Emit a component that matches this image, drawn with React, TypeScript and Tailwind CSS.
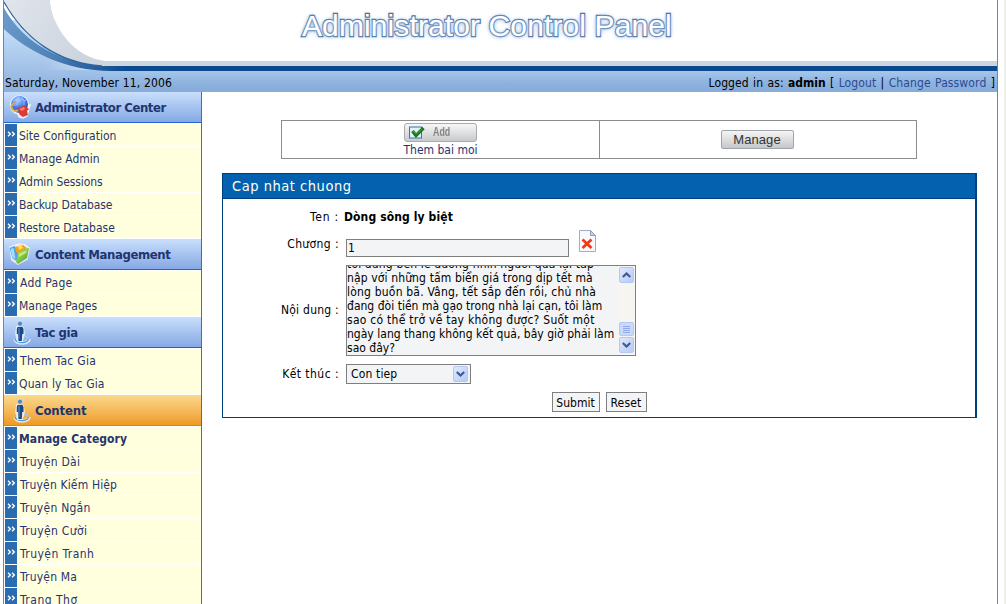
import React from "react";

type IconKind = "globe" | "folder" | "person";

function MenuIcon({ kind }: { kind: IconKind }) {
  if (kind === "globe") {
    return (
      <svg width="24" height="26" viewBox="0 0 24 26" className="shrink-0">
        <defs>
          <radialGradient id="globe" cx=".4" cy=".25" r=".8">
            <stop offset="0" stopColor="#b9d4ff" />
            <stop offset=".45" stopColor="#4f86ee" />
            <stop offset="1" stopColor="#1b45ae" />
          </radialGradient>
        </defs>
        <circle cx="12.500" cy="11" r="9.800" fill="#fff" opacity=".7" />
        <path d="M10 16l2 7 4 1 4-2 1-4 2-7z" fill="#fff" stroke="#fff" strokeWidth="1.500" opacity=".8" />
        <circle cx="12.500" cy="10.500" r="8.500" fill="url(#globe)" />
        <path d="M6 7q6-4 13 0M5 11h5M12 3q-3 4-2 8M15 3q3 4 2 8" stroke="#a9c8ff" strokeWidth=".8" fill="none" />
        <path d="M9 9c-4 0-5.500 3-4 5.500s4 3.500 6 1.500" fill="none" stroke="#e0a84a" strokeWidth="2" />
        <path d="M10 14l3-1 7-2-1 2 3 2-2 2 1 4-5 2-3-2-2-3 2-1z" fill="#dd3a34" />
        <path d="M12 15l5-2 1 2-3 2z" fill="#ff7d68" />
      </svg>
    );
  }
  if (kind === "folder") {
    return (
      <svg width="24" height="26" viewBox="0 0 24 26" className="shrink-0">
        <defs>
          <linearGradient id="folder" x1="0" y1="0" x2="1" y2="1">
            <stop offset="0" stopColor="#c4ee62" />
            <stop offset="1" stopColor="#3c9a2a" />
          </linearGradient>
        </defs>
        <path d="M3 6l6-2 3-1 6 1 4 3-2 11-9 5-6-4z" fill="#fff" stroke="#fff" strokeWidth="1.500" opacity=".7" />
        <path d="M2.500 7l5-2 4 5-1 11-5-4z" fill="#4fa3e3" />
        <path d="M3.500 8l3-1 2 11-3-2z" fill="#a7dcff" />
        <path d="M8 6l8-2 4 3-8 6-3-2z" fill="#f0a020" />
        <path d="M11 5l3-2 2 4-4 2z" fill="#ffe25a" />
        <path d="M11 12l4-2 1-2 6-1-2 10-9 6-2-2z" fill="url(#folder)" />
        <path d="M12 13l4-2 4-2-1 3-7 4z" fill="#e2f79a" opacity=".7" />
      </svg>
    );
  }
  return (
    <svg width="24" height="26" viewBox="0 0 24 26" className="shrink-0">
      <path d="M8 20q1 4 8 4 6-1 6-4" fill="none" stroke="#fff" strokeWidth="3.500" opacity=".7" />
      <path d="M8 20q1 3.500 8 3.500 5-.5 5.500-3.500" fill="none" stroke="#4f9be6" strokeWidth="1.500" />
      <path d="M17 17q3.500.5 4.500 2.500" fill="none" stroke="#9cc8f6" strokeWidth="1.400" />
      <path d="M10 8l6 1 1 6-2 7h-4L9 15z" fill="#fff" stroke="#fff" strokeWidth="1.800" opacity=".7" />
      <circle cx="13" cy="4.700" r="2.600" fill="#5787bd" stroke="#e8f1fc" strokeWidth=".7" />
      <path d="M10.500 8h5l1 2v5h-1.300L14.800 22h-3.300l-.5-7H9.800v-5z" fill="#174a86" />
      <path d="M12 9v11" fill="none" stroke="#5f97d2" strokeWidth="1" />
    </svg>
  );
}

interface Section {
  title: string;
  icon: IconKind;
  active?: boolean;
  titleClass: string;
  items: { label: string; cls: string }[];
}

const sections: Section[] = [
  {
    title: "Administrator Center",
    icon: "globe",
    titleClass: "tracking-[-0.45px]",
    items: [
      { label: "Site Configuration", cls: "tracking-[0px]" },
      { label: "Manage Admin", cls: "tracking-[0px]" },
      { label: "Admin Sessions", cls: "tracking-[-0.07px]" },
      { label: "Backup Database", cls: "tracking-[-0.07px]" },
      { label: "Restore Database", cls: "tracking-[0px]" },
    ],
  },
  {
    title: "Content Management",
    icon: "folder",
    titleClass: "tracking-[-0.4px]",
    items: [
      { label: "Add Page", cls: "ml-px tracking-[0.25px]" },
      { label: "Manage Pages", cls: "tracking-[0px]" },
    ],
  },
  {
    title: "Tac gia",
    icon: "person",
    titleClass: "tracking-[-0.4px]",
    items: [
      { label: "Them Tac Gia", cls: "ml-px tracking-[0.3px]" },
      { label: "Quan ly Tac Gia", cls: "tracking-[0.13px]" },
    ],
  },
  {
    title: "Content",
    icon: "person",
    active: true,
    titleClass: "tracking-[-0.15px]",
    items: [
      { label: "Manage Category", cls: "font-bold tracking-[0.07px]" },
      { label: "Truyện Dài", cls: "ml-px tracking-[0.3px]" },
      { label: "Truyện Kiếm Hiệp", cls: "ml-px tracking-[0.15px]" },
      { label: "Truyện Ngắn", cls: "ml-px tracking-[0.25px]" },
      { label: "Truyện Cười", cls: "ml-px tracking-[0.35px]" },
      { label: "Truyện Tranh", cls: "ml-px tracking-[0.45px]" },
      { label: "Truyện Ma", cls: "ml-px tracking-[0.2px]" },
      { label: "Trang Thơ", cls: "ml-px tracking-[0.5px]" },
    ],
  },
];

function Sidebar() {
  return (
    <nav className="w-[198px] shrink-0 border-r border-[#5f6b78] bg-white text-[#27346f]">
      {sections.map((s) => (
        <section key={s.title}>
          <h2
            className={
              s.active
                ? "mb-px flex h-[31px] items-center border-b border-[#d98613] bg-linear-to-b from-[#fbd98a] to-[#ee9a1c] pl-[3px] text-[13px] font-bold text-[#1f3570]"
                : "mb-px flex h-[31px] items-center border-b border-[#1f66c8] bg-linear-to-b from-[#c9dffc] to-[#86a9e4] pl-[3px] text-[13px] font-bold text-[#1f3570]"
            }
          >
            <MenuIcon kind={s.icon} />
            <span className={"ml-1 " + s.titleClass}>{s.title}</span>
          </h2>
          <ul>
            {s.items.map((it) => (
              <li key={it.label} className="mb-px flex h-[22px] pl-px">
                <span className="flex w-3 shrink-0 items-center justify-center bg-[#2a6cb0]">
                  <svg width="9" height="6" viewBox="0 0 9 6" className="mb-[3px]">
                    <path d="M1 .8L3.300 3 1 5.200M5 .8L7.300 3 5 5.200" fill="none" stroke="#fff" strokeWidth="1.400" />
                  </svg>
                </span>
                <span className="flex grow items-center bg-[#ffffdd] pt-[2px] pl-[2px] whitespace-nowrap">
                  <span className={it.cls}>{it.label}</span>
                </span>
              </li>
            ))}
          </ul>
        </section>
      ))}
    </nav>
  );
}

function Header() {
  return (
    <header className="relative h-[92px] shrink-0 overflow-hidden">
      <svg width="993" height="92" viewBox="0 0 993 92" className="absolute inset-0">
        <defs>
          <linearGradient id="bar" x1="0" y1="0" x2="0" y2="1">
            <stop offset="0" stopColor="#a9c8ec" />
            <stop offset=".6" stopColor="#8db2de" />
            <stop offset="1" stopColor="#86abda" />
          </linearGradient>
          <linearGradient id="corner" x1="0" y1="28" x2="0" y2="92" gradientUnits="userSpaceOnUse">
            <stop offset="0" stopColor="#c6dffa" />
            <stop offset="1" stopColor="#8db0dd" />
          </linearGradient>
          <linearGradient id="cornerFade" x1="40" y1="0" x2="160" y2="0" gradientUnits="userSpaceOnUse">
            <stop offset="0" stopColor="#fff" />
            <stop offset="1" stopColor="#000" />
          </linearGradient>
          <mask id="fade">
            <rect width="170" height="92" fill="url(#cornerFade)" />
          </mask>
          <linearGradient id="swoosh" x1="0" y1="0" x2="120" y2="70" gradientUnits="userSpaceOnUse">
            <stop offset="0" stopColor="#6f9ccb" />
            <stop offset=".5" stopColor="#4f82b8" />
            <stop offset="1" stopColor="#0b4a8e" />
          </linearGradient>
          <linearGradient id="silver" x1="0" y1="0" x2="70" y2="60" gradientUnits="userSpaceOnUse">
            <stop offset="0" stopColor="#e1e5ec" />
            <stop offset="1" stopColor="#cdd5df" />
          </linearGradient>
        </defs>
        <rect width="993" height="92" fill="#fff" />
        <rect y="70" width="993" height="22" fill="url(#bar)" />
        <rect y="20" width="170" height="72" fill="url(#corner)" mask="url(#fade)" />
        <path d="M0 0V29C22 50 60 71 108 71H993V66H108C60 66 20 44 0 8z" fill="url(#swoosh)" />
        <path d="M0 0V2C20 38 53 63 98 66H993V61H102C70 58 48 27 46 0z" fill="url(#silver)" />
        <path d="M46 0C48 27 70 58 102 61H993V0z" fill="#fff" />
        <path d="M0 2C20 38 53 63 98 66" fill="none" stroke="#2f649d" strokeWidth="1.300" />
      </svg>
      <div className="relative flex h-full flex-col">
        <h1 className="pt-[8px] pl-[298px] font-[Liberation_Sans] text-[30px] leading-[36px] tracking-[0.11px] whitespace-nowrap text-white [-webkit-text-stroke:2.4px_#3d5b86] [paint-order:stroke_fill] [text-shadow:0_0_4px_#8fb6e6,0_1px_5px_#b4d0f2]">
          Administrator Control Panel
        </h1>
        <div className="mt-auto flex h-[17px] items-center justify-between pr-[2px] pl-px whitespace-nowrap text-black">
          <span className="tracking-[0.14px]">Saturday, November 11, 2006</span>
          <span className="tracking-[0.12px] [word-spacing:0.75px]">
            Logged in as: <b className="tracking-[0px]">admin</b> [ <a className="text-[#2b4a94]">Logout</a> |{" "}
            <a className="text-[#2b4a94]">Change Password</a> ]
          </span>
        </div>
      </div>
    </header>
  );
}

function Chevron({ up }: { up?: boolean }) {
  return (
    <span className="flex h-4 w-[15px] items-center justify-center rounded-[2px] border border-[#b5c8f5] bg-linear-to-br from-[#dfe9ff] to-[#b5caf8]">
      <svg width="9" height="6" viewBox="0 0 9 6">
        <path d={up ? "M.8 5L4.500 1.500 8.200 5" : "M.8 1L4.500 4.500 8.200 1"} fill="none" stroke="#43598c" strokeWidth="2.200" />
      </svg>
    </span>
  );
}

const story = [
  { t: "tôi đứng bên lề đường nhìn người qua lại tấp", c: "tracking-[0.15px]" },
  { t: "nập với những tấm biển giá trong dịp tết mà", c: "tracking-[0.13px]" },
  { t: "lòng buồn bã. Vâng, tết sắp đến rồi, chủ nhà", c: "tracking-[0.2px]" },
  { t: "đang đòi tiền mà gạo trong nhà lại cạn, tôi làm", c: "tracking-[0.02px]" },
  { t: "sao có thể trở về tay không được? Suốt một", c: "tracking-[0.26px]" },
  { t: "ngày lang thang không kết quả, bây giờ phải làm", c: "tracking-[0.02px]" },
  { t: "sao đây?", c: "tracking-[0px]" },
];

function Toolbar() {
  return (
    <div className="mt-[28px] ml-[79px] flex h-[39px] w-[636px] border border-[#8c8c8c]">
      <div className="flex w-[318px] flex-col items-center border-r border-[#8c8c8c] pt-[2px]">
        <div className="flex h-[19px] w-[73px] shrink-0 items-center rounded-[3px] border border-[#a9abb0] bg-linear-to-b from-[#f7f7f7] to-[#c9cacc] pl-[3px]">
          <svg width="18" height="15" viewBox="0 0 18 15">
            <rect x="1.500" y="2" width="12" height="11" fill="#e4eefc" stroke="#3c6fb7" />
            <path d="M4.500 6L8 10.500 15.500 3" fill="none" stroke="#17791b" strokeWidth="3.400" />
            <path d="M5 6l3 3 6-5" fill="none" stroke="#3fae35" strokeWidth="1" />
          </svg>
          <span className="ml-[7px] inline-block origin-left scale-x-[0.74] font-[Liberation_Sans] text-[12px] font-bold text-[#858585]">Add</span>
        </div>
        <a className="pt-px leading-[15px] tracking-[0px] text-[#27346f]">Them bai moi</a>
      </div>
      <div className="flex grow items-center justify-center pr-[2px]">
        <div className="flex h-[19px] w-[73px] items-center justify-center rounded-[2px] border border-[#a0a4ae] bg-linear-to-b from-[#f5f5f5] to-[#c6c7c9] font-[Liberation_Sans] text-[13px] tracking-[0.1px] text-[#333]">
          Manage
        </div>
      </div>
    </div>
  );
}

function Label({ children, cls }: { children: React.ReactNode; cls: string }) {
  return (
    <span className="w-[116px] shrink-0 text-right">
      <span className={cls}>{children}</span>
    </span>
  );
}

function ChapterForm() {
  return (
    <section className="mt-[14px] ml-[20px] h-[245px] w-[755px] border border-r-2 border-[#003f7d] bg-white text-black">
      <h2 className="flex h-[25px] items-center border-b border-[#003f7d] bg-[#0461b0] pl-[9px] text-[14.5px] tracking-[0.53px] text-[#fffff0]">
        Cap nhat chuong
      </h2>
      <div className="flex h-[32px] items-center pt-[4px]">
        <Label cls="tracking-[0.8px]">Ten :</Label>
        <b className="ml-[5px] tracking-[0.12px]">Dòng sông ly biệt</b>
      </div>
      <div className="flex h-[34px] items-start">
        <span className="flex pt-[6px]">
          <Label cls="tracking-[0.4px]">Chương :</Label>
        </span>
        <span className="mt-[8px] ml-[7px] flex h-[18px] w-[223px] items-center border border-[#7f7f7f] bg-[#f3f4f6] pl-px">1</span>
        <svg width="17" height="22" viewBox="0 0 17 22" className="-mt-px ml-[10px]">
          <path d="M.5.5H11.500L16.500 5.500V21.500H.5z" fill="#f7f9fd" stroke="#a3adc2" />
          <path d="M11.500.5V5.500H16.500z" fill="#c6d2ea" stroke="#8f9dba" />
          <path d="M3.500 9.500L12.500 18M12.500 9.500L3.500 18" stroke="#ee3b1c" strokeWidth="2.800" />
        </svg>
      </div>
      <div className="flex h-[91px] items-center">
        <Label cls="tracking-[0.25px]">Nội dung :</Label>
        <div className="ml-[7px] flex h-[91px] w-[290px] border border-[#7f7f7f] bg-[#f3f4f6]">
          <div className="flex grow flex-col justify-end overflow-hidden">
            {story.map((l) => (
              <span key={l.t} className="h-[14px] shrink-0 leading-[14px] whitespace-nowrap">
                <span className={l.c}>{l.t}</span>
              </span>
            ))}
          </div>
          <div className="flex w-[17px] shrink-0 flex-col items-center bg-[#f6f5f1] pt-px pb-[2px]">
            <Chevron up />
            <span className="mt-auto mb-px flex h-[14px] w-[15px] flex-col items-center justify-center gap-px rounded-[2px] border border-[#b5c8f5] bg-[#c9d9fd]">
              <i className="h-px w-[7px] bg-[#8fabea]" />
              <i className="h-px w-[7px] bg-[#8fabea]" />
              <i className="h-px w-[7px] bg-[#8fabea]" />
              <i className="h-px w-[7px] bg-[#8fabea]" />
            </span>
            <Chevron />
          </div>
        </div>
      </div>
      <div className="mt-[8px] flex h-[20px] items-center">
        <Label cls="tracking-[0.45px]">Kết thúc :</Label>
        <div className="ml-[7px] flex h-[20px] w-[125px] items-center justify-between border border-[#7f7f7f] bg-[#f3f4f6] pr-[2px] pl-[4px]">
          <span className="tracking-[0.15px]">Con tiep</span>
          <Chevron />
        </div>
      </div>
      <div className="mt-[8px] ml-[329px] flex gap-[6px]">
        <button className="h-[20px] w-[48px] border border-[#7f7f7f] bg-[#f3f4f6] pt-px pr-px leading-none whitespace-nowrap">Submit</button>
        <button className="h-[20px] w-[41px] border border-[#7f7f7f] bg-[#f3f4f6] pt-px pr-px leading-none tracking-[0.2px] whitespace-nowrap">Reset</button>
      </div>
    </section>
  );
}

export default function App() {
  return (
    <div className="flex h-[604px] w-[1006px] overflow-hidden bg-white pl-[3px] font-['DejaVu_Sans_Condensed','DejaVu_Sans',sans-serif] text-[12px] leading-[15px]">
      <div className="flex w-[995px] flex-col border-x border-[#87846f] bg-white">
        <Header />
        <div className="flex min-h-0 grow">
          <Sidebar />
          <main className="grow">
            <Toolbar />
            <ChapterForm />
          </main>
        </div>
      </div>
      <div className="ml-[6px] w-[2px] bg-[#f0efe8]" />
    </div>
  );
}
